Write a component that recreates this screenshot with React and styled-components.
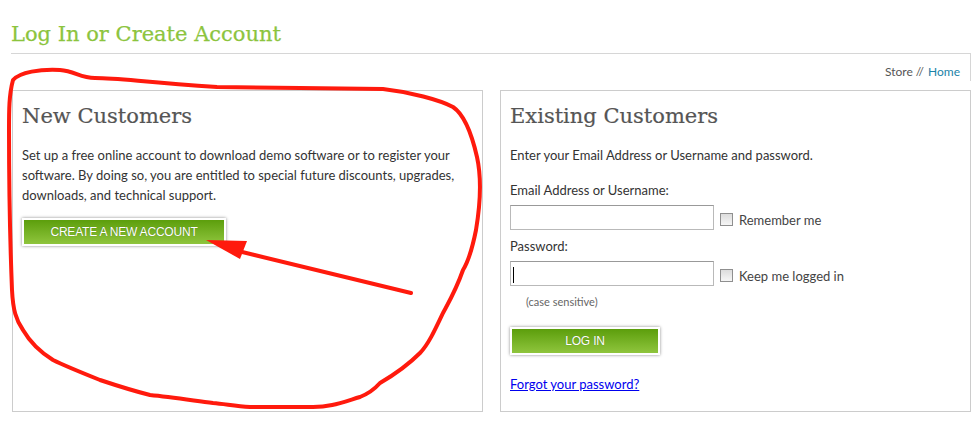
import React from "react";
import styled, { createGlobalStyle } from "styled-components";

const GlobalStyle = createGlobalStyle`
  html, body { margin: 0; padding: 0; background: #ffffff; }
  body { font-family: Lato, "Open Sans", sans-serif; color: #333; }
  * { box-sizing: border-box; }
`;

const Page = styled.div`
  position: relative;
  width: 980px;
  height: 421px;
  padding: 21px 9px 0 11px;
  overflow: hidden;
`;

const TitleBar = styled.div`
  border-bottom: 1px solid #d6d6d6;
  padding-bottom: 6px;
`;

const Title = styled.h1`
  margin: 0;
  font-family: "DejaVu Serif", serif;
  font-weight: normal;
  font-size: 21px;
  line-height: 26px;
  color: #8cc43e;
  -webkit-text-stroke: 0.25px #8cc43e;
`;

const Crumbs = styled.div`
  border-right: 1px solid #d6d6d6;
  height: 27px;
  display: flex;
  justify-content: flex-end;
  align-items: flex-end;
  padding: 0 10px 2px 0;
  font-size: 12px;
  color: #555;
`;

const CrumbLink = styled.a`
  color: #1b82a8;
  text-decoration: none;
  margin-left: 4px;
`;

const Panels = styled.div`
  display: grid;
  grid-template-columns: 471px 471px;
  gap: 17px;
  margin: 9px 0 0 1px;
`;

const Panel = styled.section`
  height: 322px;
  border: 1px solid #cccccc;
  padding: 12px 10px 0 9px;
`;

const PanelTitle = styled.h2`
  margin: 0 0 16px 0;
  font-family: "DejaVu Serif", serif;
  font-weight: normal;
  font-size: 21px;
  line-height: 26px;
  color: #555;
  -webkit-text-stroke: 0.2px #555;
`;

const Text = styled.p`
  margin: 0;
  font-size: 13px;
  line-height: 20px;
  color: #333;
`;

const Button = styled.button`
  display: block;
  width: ${(p) => p.$w}px;
  height: 28px;
  margin-top: ${(p) => p.$mt}px;
  padding: 0;
  border: 2px solid #fff;
  background: linear-gradient(#5c9e0c, #8fc53d);
  box-shadow: 0 0 3px rgba(0, 0, 0, 0.45);
  color: #fff;
  font-family: "Liberation Sans", Arial, sans-serif;
  font-size: 12px;
  letter-spacing: -0.2px;
  text-transform: uppercase;
  text-shadow: 0 0 1px rgba(0, 0, 0, 0.35);
  cursor: pointer;
`;

const Label = styled.div`
  font-size: 13px;
  line-height: 16px;
  color: #333;
  margin-top: ${(p) => p.$mt || 0}px;
`;

const Row = styled.div`
  display: flex;
  align-items: center;
  margin-top: 7px;
`;

const Input = styled.input`
  width: 204px;
  height: 25px;
  border: 1px solid #b9b9b9;
  border-top-color: #999;
  padding: 0 6px;
  margin: 0;
  font-family: Lato, sans-serif;
  font-size: 13px;
  outline: none;
`;

const Check = styled.span`
  display: inline-block;
  width: 13px;
  height: 13px;
  margin: 3px 6px 0 6px;
  border: 1px solid #8f8f8f;
  background: linear-gradient(#dcdcdc, #f6f6f6);
`;

const CheckText = styled.span`
  margin-top: 4px;
  font-size: 13px;
  color: #444;
`;

const Hint = styled.div`
  font-size: 11px;
  color: #666;
  margin: 9px 0 0 16px;
`;

const Forgot = styled.a`
  display: block;
  margin-top: 21px;
  font-size: 13px;
  color: #0000ee;
  text-decoration: underline;
`;

const Caret = styled.span`
  position: absolute;
  left: 513px;
  top: 267px;
  width: 1px;
  height: 16px;
  background: #000;
`;

const Overlay = styled.svg`
  position: absolute;
  left: 0;
  top: 0;
  pointer-events: none;
`;

export default function App() {
  return (
    <>
      <GlobalStyle />
      <Page>
        <TitleBar>
          <Title>Log In or Create Account</Title>
        </TitleBar>
        <Crumbs>
          Store //<CrumbLink href="#">Home</CrumbLink>
        </Crumbs>
        <Panels>
          <Panel>
            <PanelTitle>New Customers</PanelTitle>
            <Text>
              Set up a free online account to download demo software or to register your
              software. By doing so, you are entitled to special future discounts, upgrades,
              downloads, and technical support.
            </Text>
            <Button $w={204} $mt={13}>Create a new account</Button>
          </Panel>
          <Panel>
            <PanelTitle>Existing Customers</PanelTitle>
            <Text>Enter your Email Address or Username and password.</Text>
            <Label $mt={17}>Email Address or Username:</Label>
            <Row>
              <Input type="text" />
              <Check />
              <CheckText>Remember me</CheckText>
            </Row>
            <Label $mt={8}>Password:</Label>
            <Row>
              <Input type="password" />
              <Check />
              <CheckText>Keep me logged in</CheckText>
            </Row>
            <Hint>(case sensitive)</Hint>
            <Button $w={150} $mt={19}>Log in</Button>
            <Forgot href="#">Forgot your password?</Forgot>
          </Panel>
        </Panels>
        <Caret />
        <Overlay width="980" height="421" viewBox="0 0 980 421">
          <path
            d="M13 80 C 20 72, 40 69, 60 70 C 75 71, 80 78, 95 78 C 120 78, 140 82, 217 87 C 260 88, 340 88, 383 89 C 410 92, 440 100, 453 107 C 465 115, 472 135, 477 157 C 481 175, 481 200, 476 230 C 472 250, 468 262, 463 270 C 456 290, 450 300, 443 313 C 435 330, 428 345, 420 353 C 405 368, 392 376, 380 383 C 372 392, 365 395, 360 397 C 340 403, 330 407, 313 407 L 250 407 C 235 406, 225 404, 213 403 C 190 400, 170 397, 150 395 C 130 390, 115 385, 100 380 C 80 372, 65 366, 53 360 C 40 352, 30 342, 23 330 C 16 320, 13 310, 12 290 C 10 240, 9 180, 9 130 C 9 110, 9 95, 13 80 Z"
            fill="none"
            stroke="#ff1a0d"
            strokeWidth="4"
            strokeLinejoin="round"
          />
          <line x1="411" y1="293" x2="238" y2="251" stroke="#ff1a0d" strokeWidth="4" strokeLinecap="round" />
          <polygon points="206,240 247,241 240,259" fill="#ff1a0d" />
        </Overlay>
      </Page>
    </>
  );
}
